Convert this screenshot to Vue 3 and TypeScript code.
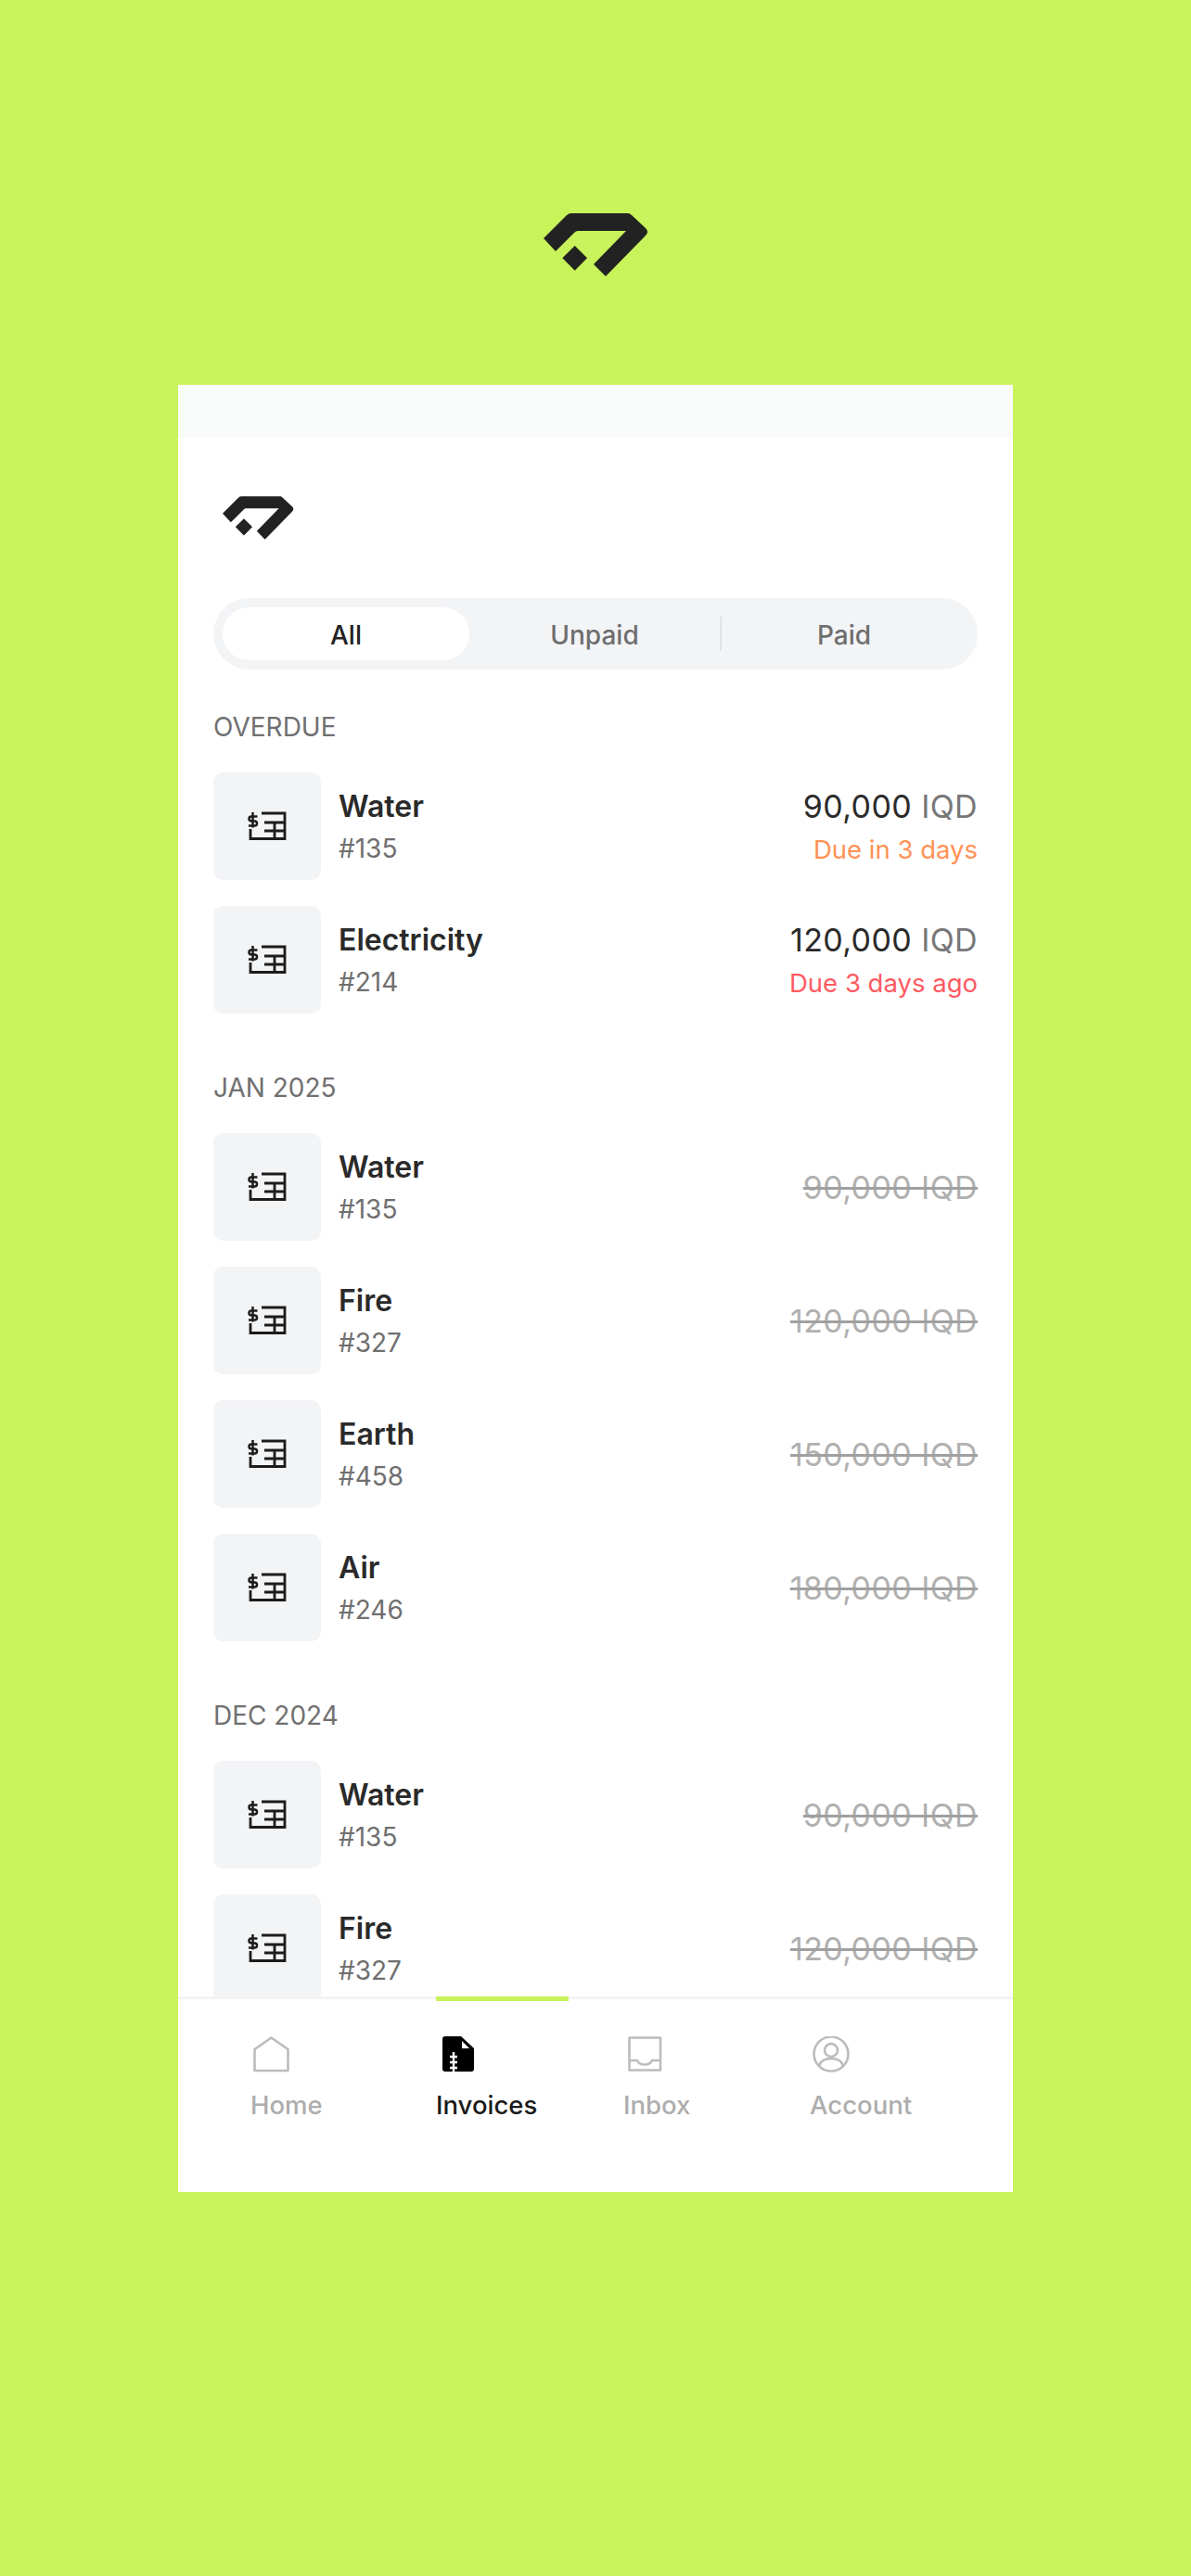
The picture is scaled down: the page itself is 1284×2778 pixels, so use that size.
<template>
  <div class="page">
    <svg class="logo-big" viewBox="0 0 113 68"><use href="#brand" /></svg>

    <div class="phone">
      <div class="status"></div>

      <div class="content">
        <svg class="logo-small" viewBox="0 0 113 68">
          <defs>
            <g id="brand">
              <path d="M0 27 L25 2 Q27 0 30 0 L91 0 Q93 0 95 2 L110 16 Q114 20 110 24 L67 68 L54 55 L89 19 L37 19 Q35 19 33 21 L13 41 Z" />
              <path d="M33.700 35 L47 48.300 L33.700 61.700 L20.300 48.300 Z" />
            </g>
          </defs>
          <use href="#brand" />
        </svg>

        <div class="tabs">
          <div v-for="t in tabs" :key="t" class="tab" :class="{ active: t === 'All' }">{{ t }}</div>
          <span class="tab-divider"></span>
        </div>

        <div v-for="s in sections" :key="s.title" class="section">
          <div class="section-title">{{ s.title }}</div>
          <div v-for="(r, i) in s.rows" :key="i" class="row">
            <div class="row-icon">
              <svg width="42" height="32" viewBox="0 0 42 32" fill="none" stroke="#1c1c1c" stroke-width="2.800">
                <path d="M15 2 H40 V29.500 H3 V19" />
                <path d="M18 12 H40 M18 21 H40 M29 12 V29.500" />
                <path d="M10.500 5.500 H4 Q1.500 5.500 1.500 8 Q1.500 10.500 4.500 10.500 H7.500 Q10 10.500 10 13 Q10 15.500 7.500 15.500 H1 M5.500 1 V17.500" stroke-width="2.500" />
              </svg>
            </div>
            <div class="row-text">
              <div class="row-name">{{ r.name }}</div>
              <div class="row-num">{{ r.num }}</div>
            </div>
            <div class="row-right">
              <div v-if="r.due" class="amount"><span>{{ r.amount }}</span> <span class="cur">IQD</span></div>
              <div v-else class="amount paid">{{ r.amount }} IQD</div>
              <div v-if="r.due" class="due" :class="r.late ? 'late' : 'soon'">{{ r.due }}</div>
            </div>
          </div>
        </div>
      </div>

      <nav class="nav">
        <div v-for="n in nav" :key="n.label" class="nav-item" :class="[n.key, { on: n.key === 'invoices' }]">
          <svg width="46" height="40" viewBox="0 0 46 40" fill="none" stroke="#bcbcbc" stroke-width="2.600">
            <path v-if="n.key === 'home'" d="M4.500 37 V14 L22.500 1.500 L40.500 14 V37 Z" stroke-linejoin="round" />
            <template v-else-if="n.key === 'invoices'">
              <path d="M7 3 Q7 0 10 0 H27 L41 13 V35 Q41 38 38 38 H10 Q7 38 7 35 Z" fill="#000" stroke="none" />
              <path d="M28 5 L36 13 H28 Z" fill="#fff" stroke="none" />
              <path d="M19 17 V38 M15 22 H23 M15 28 H23 M15 34 H23" stroke="#fff" stroke-width="2.400" />
            </template>
            <template v-else-if="n.key === 'inbox'">
              <path d="M6.500 1.500 H40 V36.500 H6.500 Z" stroke-linejoin="round" />
              <path d="M6.500 26 H15 Q17 30.500 23 30.500 Q29 30.500 31 26 H40" />
            </template>
            <template v-else>
              <circle cx="23" cy="19" r="18.500" />
              <circle cx="23" cy="15" r="7" />
              <path d="M10 32 Q12 24 23 24 Q34 24 36 32" />
            </template>
          </svg>
          <span class="nav-label">{{ n.label }}</span>
        </div>
      </nav>
    </div>
  </div>
</template>

<script setup lang="ts">
interface Row {
  name: string
  num: string
  amount: string
  due?: string
  late?: boolean
}

const tabs = ['All', 'Unpaid', 'Paid']

const sections: { title: string; rows: Row[] }[] = [
  {
    title: 'OVERDUE',
    rows: [
      { name: 'Water', num: '#135', amount: '90,000', due: 'Due in 3 days' },
      { name: 'Electricity', num: '#214', amount: '120,000', due: 'Due 3 days ago', late: true },
    ],
  },
  {
    title: 'JAN 2025',
    rows: [
      { name: 'Water', num: '#135', amount: '90,000' },
      { name: 'Fire', num: '#327', amount: '120,000' },
      { name: 'Earth', num: '#458', amount: '150,000' },
      { name: 'Air', num: '#246', amount: '180,000' },
    ],
  },
  {
    title: 'DEC 2024',
    rows: [
      { name: 'Water', num: '#135', amount: '90,000' },
      { name: 'Fire', num: '#327', amount: '120,000' },
    ],
  },
]

const nav = [
  { key: 'home', label: 'Home' },
  { key: 'invoices', label: 'Invoices' },
  { key: 'inbox', label: 'Inbox' },
  { key: 'account', label: 'Account' },
]
</script>

<style>
html, body { margin: 0; background: #c8f35a; }
</style>

<style scoped>
.page {
  min-height: 2778px;
  display: flex;
  flex-direction: column;
  align-items: center;
  padding-top: 230px;
  box-sizing: border-box;
  background: #c8f35a;
  font-family: Inter, "Noto Sans", sans-serif;
}
.logo-big { width: 113px; height: 68px; margin-bottom: 117px; fill: #222; }
.phone {
  width: 900px;
  height: 1949px;
  background: #fff;
  display: flex;
  flex-direction: column;
  overflow: hidden;
}
.status { height: 57px; background: #f9fafa; flex: none; }
.content { flex: 1; min-height: 0; overflow: hidden; padding: 63px 38px 0 38px; }
.logo-small { display: block; width: 77px; height: 47px; margin-left: 10px; fill: #222; }

.tabs {
  position: relative;
  margin-top: 63px;
  height: 77px;
  background: #f3f4f6;
  border-radius: 39px;
  padding: 10px;
  box-sizing: border-box;
  display: grid;
  grid-template-columns: 266px 270px 1fr;
}
.tab {
  display: flex;
  align-items: center;
  justify-content: center;
  padding-top: 3px;
  font-size: 28px;
  font-weight: 500;
  color: #6e6e6e;
  border-radius: 29px;
}
.tab.active { background: #fff; color: #222; }
.tab-divider {
  position: absolute;
  left: 546px;
  top: 20px;
  bottom: 20px;
  width: 2px;
  background: #e2e3e6;
}

.section { margin-top: 44px; }
.section + .section { margin-top: 62px; }
.section-title { font-size: 28px; line-height: 36px; color: #707070; margin-bottom: 31px; }
.row { display: flex; align-items: center; height: 116px; margin-bottom: 28px; }
.row-icon {
  width: 116px;
  height: 116px;
  flex: none;
  border-radius: 10px;
  background: #f3f4f6;
  display: flex;
  align-items: center;
  justify-content: center;
}
.row-text { margin-left: 19px; padding-top: 2px; }
.row-name { font-size: 32px; line-height: 44px; font-weight: 600; color: #2a2a2a; }
.row-num { font-size: 28px; line-height: 42px; margin-top: 2px; color: #6f6f6f; }
.row-right { margin-left: auto; text-align: right; padding-top: 2px; }
.amount { font-size: 34px; line-height: 44px; letter-spacing: 0.4px; color: #2a2a2a; }
.cur { color: #777; }
.amount.paid { color: #b0b0b0; text-decoration: line-through; text-decoration-color: #a0a0a0; }
.due { font-size: 27.500px; line-height: 42px; margin-top: 3px; }
.soon { color: #ff9255; }
.late { color: #ff5a62; }

.nav {
  position: relative;
  height: 211px;
  flex: none;
  border-top: 3px solid #f3f4f6;
  box-sizing: border-box;
  display: grid;
  grid-template-columns: 278px 202px 201px 1fr;
}
.nav-item {
  display: flex;
  flex-direction: column;
  align-items: flex-start;
  padding-top: 40px;
  font-size: 27.500px;
  font-weight: 500;
  color: #adadad;
}
.nav-item.on { color: #1a1a1a; }
.nav-item.on::before {
  content: "";
  position: absolute;
  top: -3px;
  left: 278px;
  width: 143px;
  height: 5px;
  background: #c8f35a;
}
.nav-label { margin-top: 16px; line-height: 36px; }
.nav-item.home { padding-left: 78px; }
</style>
